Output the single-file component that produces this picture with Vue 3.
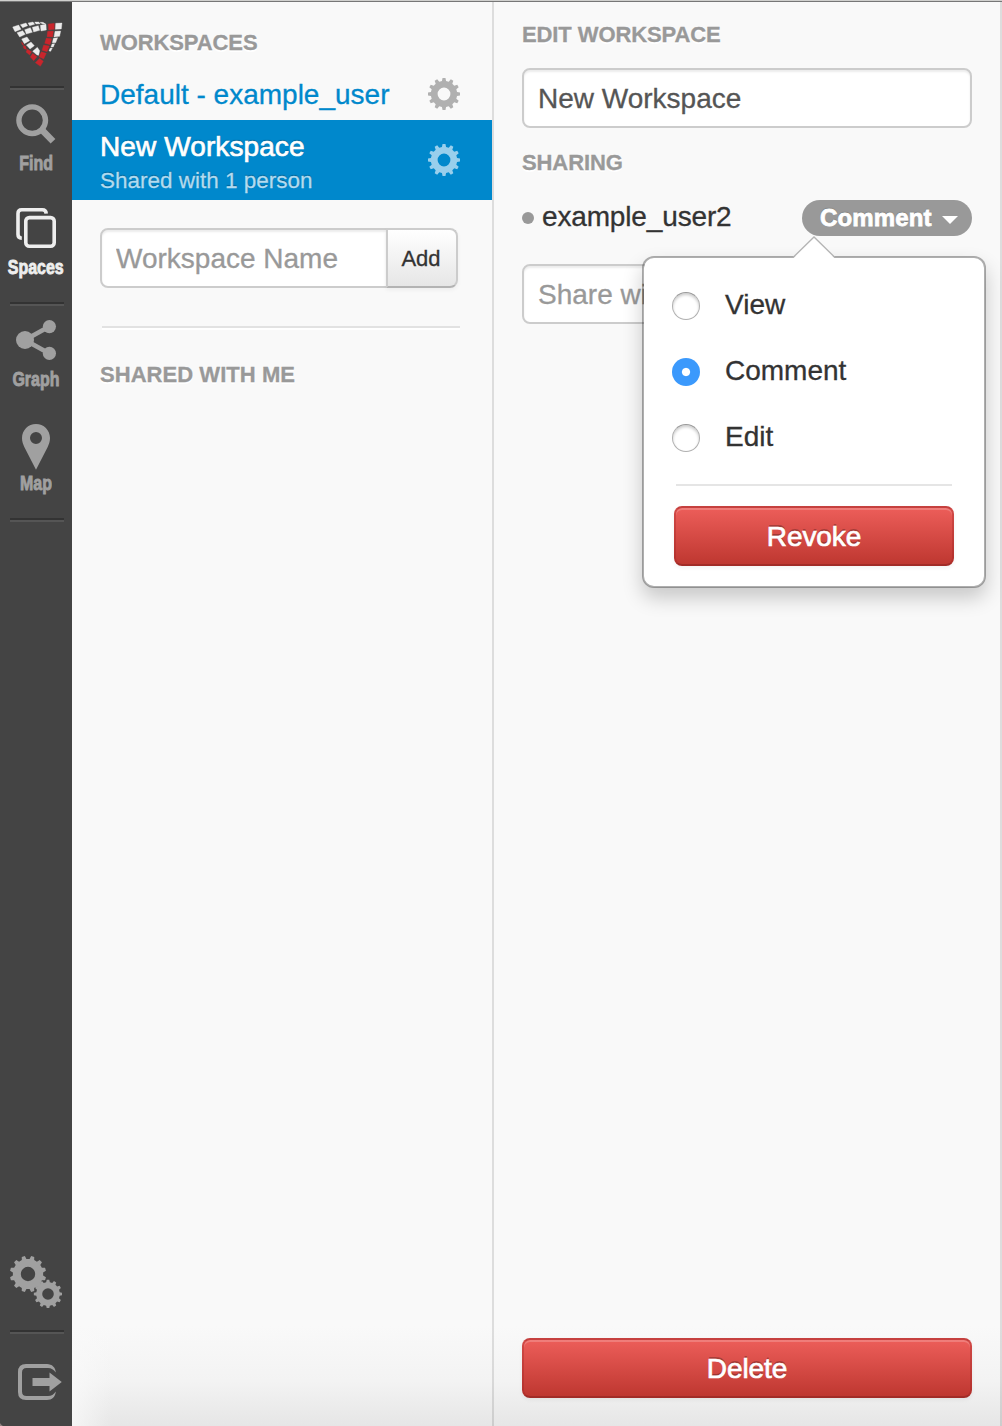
<script setup>
import { ref } from 'vue'

const workspaceName = ref('New Workspace')
const permission = ref('Comment')
const permissions = ['View', 'Comment', 'Edit']

// Outline of a toothed wheel with a round hole
function gear(cx, cy, outer, root, hole, teeth, turn) {
  const step = (Math.PI * 2) / teeth
  const at = (r, a) => `${(cx + r * Math.sin(a)).toFixed(2)} ${(cy - r * Math.cos(a)).toFixed(2)}`
  const points = []
  for (let i = 0; i < teeth; i++) {
    const a = i * step + turn
    points.push(at(root, a - step * 0.3), at(outer, a - step * 0.17), at(outer, a + step * 0.17), at(root, a + step * 0.3))
  }
  return `M${points.join('L')}Z M${cx - hole} ${cy}a${hole} ${hole} 0 1 0 ${hole * 2} 0a${hole} ${hole} 0 1 0 ${-hole * 2} 0Z`
}

const listGear = gear(16, 16, 16.2, 13.2, 6.4, 12, 0)
const bigGear = gear(18, 18, 18.2, 15.2, 7.2, 12, Math.PI / 12)
const smallGear = gear(38, 38, 14.2, 11.8, 5.8, 12, 0)

const whiteTiles = [
  '38,81 56,75 63,88 45,95', '61,74 78,69 83,77 68,83', '84,69 99,66 104,73 89,77',
  '104,66 116,66 121,71 108,72', '120,67 129,67 138,73 126,71',
  '51,98 68,92 76,103 59,111', '74,89 91,83 97,97 79,102', '97,82 115,77 119,91 101,96',
  '121,76 138,73 139,90 123,93',
  '65,117 81,111 89,122 73,131', '79,135 93,126 103,137 90,147', '98,154 112,142 119,152 116,166 111,165',
  '167,70 186,69 184,87 166,88', '165,94 182,93 179,109 162,111',
  '160,115 173,113 167,128 157,128', '156,132 164,131 160,141 153,141', '150,145 157,144 152,154 147,153'
]
const redTiles = [
  '145,72 163,70 163,88 146,90', '143,94 160,93 158,111 141,110', '139,114 155,116 150,134 134,130',
  '131,135 148,138 141,155 126,151', '124,155 139,160 131,177 117,170', '119,175 130,184 121,199 106,188',
  '64,126 68,129 71,136 67,134', '70,137 76,138 80,149 71,145', '82,148 95,155 89,165 78,156',
  '98,160 111,170 101,182 91,171'
]
</script>

<template>
  <div class="page">
    <nav class="sidebar">
      <svg class="logo" width="72" height="84" viewBox="0 6 216 252">
        <polygon v-for="t in whiteTiles" :key="t" :points="t" fill="#ececec" stroke="#ececec" />
        <polygon v-for="t in redTiles" :key="t" :points="t" fill="#c9252c" stroke="#c9252c" />
      </svg>
      <hr class="rule" />
      <a class="item find">
        <svg width="72" height="48" viewBox="0 100 72 48" fill="none" stroke="#a0a0a0">
          <circle cx="32.2" cy="120.2" r="13.300" stroke-width="5.400" />
          <path d="M41.5 129.5L53 141.300" stroke-width="6.600" />
        </svg>
        <span>Find</span>
      </a>
      <a class="item active">
        <svg width="72" height="48" viewBox="0 204 72 48" fill="none" stroke="#eee" stroke-width="3.6">
          <rect x="25.8" y="217.6" width="28.4" height="28.6" rx="3.5" />
          <path d="M21.8 238.2Q18 238 18 234.5V213.5Q18 209.8 21.7 209.8H42.3Q46 209.8 46.2 213.6" />
        </svg>
        <span>Spaces</span>
      </a>
      <hr class="rule" />
      <a class="item graph">
        <svg width="72" height="48" viewBox="0 316 72 48" fill="#a0a0a0">
          <path d="M49.3 326.6L25 340L49.3 353.4" fill="none" stroke="#a0a0a0" stroke-width="4.6" />
          <circle cx="25" cy="340" r="9" />
          <circle cx="49.4" cy="326.6" r="6.6" />
          <circle cx="49.4" cy="353.4" r="6.6" />
        </svg>
        <span>Graph</span>
      </a>
      <a class="item map">
        <svg width="72" height="52" viewBox="0 420 72 52" fill="#a0a0a0" fill-rule="evenodd">
          <path d="M36 424C28.2 424 22 430.2 22 438C22 441.5 23 444 24.3 447L36 469.8L47.7 447C49 444 50 441.5 50 438C50 430.2 43.8 424 36 424ZM36 432A6 6 0 1 1 36 444A6 6 0 1 1 36 432Z" />
        </svg>
        <span>Map</span>
      </a>
      <hr class="rule" />
      <div class="spacer"></div>
      <svg class="gears" width="52" height="52" viewBox="0 0 52 52" fill="#a0a0a0" fill-rule="evenodd">
        <path :d="bigGear" />
        <path :d="smallGear" />
      </svg>
      <hr class="rule" />
      <svg class="logout" width="72" height="92" viewBox="0 1334 72 92">
        <path d="M47 1364C52 1364 55.500 1367.500 55.800 1372.500C53.500 1369.500 51.500 1368 48 1368H26.500Q22 1368 22 1372.500V1391.500Q22 1396 26.500 1396H48C51.500 1396 53.500 1394.500 55.800 1391.500C55.500 1396.500 52 1400 47 1400H26Q18 1400 18 1392V1372Q18 1364 26 1364Z" fill="#a0a0a0" />
        <path d="M32.5 1378H49.5V1372.500L61.800 1382L49.5 1391.500V1386H32.5Z" fill="#a0a0a0" />
      </svg>
    </nav>

    <section class="workspaces">
      <h2>Workspaces</h2>
      <div class="row">
        <div class="name">Default - example_user</div>
        <svg width="32" height="32" viewBox="0 0 32 32"><path :d="listGear" fill="#b0b0b0" fill-rule="evenodd" /></svg>
      </div>
      <div class="row selected">
        <div>
          <div class="name">New Workspace</div>
          <div class="sub">Shared with 1 person</div>
        </div>
        <svg width="32" height="32" viewBox="0 0 32 32"><path :d="listGear" fill="#99cfec" fill-rule="evenodd" /></svg>
      </div>
      <form class="add" @submit.prevent>
        <input placeholder="Workspace Name" />
        <button>Add</button>
      </form>
      <hr class="divider" />
      <h2 class="shared">Shared with me</h2>
    </section>

    <section class="editor">
      <h2>Edit Workspace</h2>
      <input v-model="workspaceName" class="field" />
      <h2 class="sharing">Sharing</h2>
      <div class="person">
        <i class="dot"></i>
        <span class="user">example_user2</span>
        <button class="pill">{{ permission }}<i class="caret"></i></button>
        <div class="popover">
          <svg class="arrow" width="44" height="23" viewBox="0 0 44 23">
            <path d="M0.5 23L22 1.5L43.5 23Z" fill="#fff" />
            <path d="M1 21.5L22 1L43 21.5" fill="none" stroke="#b4b4b4" stroke-width="1.3" />
          </svg>
          <label v-for="p in permissions" :key="p" @click="permission = p">
            <i class="radio" :class="{ on: permission === p }"></i>{{ p }}
          </label>
          <hr />
          <button class="danger">Revoke</button>
        </div>
      </div>
      <input class="field share" placeholder="Share with" />
      <div class="spacer"></div>
      <button class="danger">Delete</button>
    </section>
  </div>
</template>

<style>
body {
  margin: 0;
}
</style>

<style scoped>
.page {
  display: flex;
  box-sizing: border-box;
  width: 1002px;
  height: 1426px;
  padding-top: 2px;
  overflow: hidden;
  background: linear-gradient(#d0d0ce 1px, #777 1px, #777 2px, #f9f9f9 2px);
  color: #333;
  font: 28px/40px "Liberation Sans", Arial, sans-serif;
  -webkit-text-stroke: 0.3px currentColor;
}
* {
  box-sizing: border-box;
}
svg {
  display: block;
  flex: none;
}
.spacer {
  flex: 1;
}
.sidebar {
  display: flex;
  flex-direction: column;
  flex: none;
  width: 72px;
  background: radial-gradient(circle at 8px calc(100% - 8px), #444 9px, #8f8280 10px) 0 100% / 5px 5px no-repeat, #444;
}
.rule {
  flex: none;
  width: 54px;
  height: 4px;
  margin: 0 0 0 10px;
  border: 0;
  background: linear-gradient(#333 50%, #555 50%);
}
.item {
  display: flex;
  flex-direction: column;
  align-items: center;
  color: #a0a0a0;
}
.item span {
  height: 24px;
  font-size: 21px;
  line-height: 24px;
  font-weight: bold;
  -webkit-text-stroke: 0.9px currentColor;
  transform: scaleX(0.76);
}
.find {
  padding-top: 10px;
}
.find span {
  margin-top: 3px;
}
.active {
  margin-top: 29px;
  color: #eee;
}
.active span {
  margin-top: 3px;
  margin-bottom: 23px;
}
.graph {
  padding-top: 10px;
}
.graph span {
  margin-top: 3px;
}
.map {
  margin: 29px 0 23px;
}
.map span {
  margin-top: -1px;
}
.gears {
  margin: 0 0 22px 10px;
}
h2 {
  margin: 0;
  color: #999;
  font-size: 22px;
  line-height: 42px;
  letter-spacing: -0.1px;
  text-transform: uppercase;
  text-shadow: 0 2px 0 #fff;
}
.workspaces {
  flex: none;
  width: 420px;
  padding-top: 20px;
  background:
    linear-gradient(90deg, rgba(249, 249, 249, 0.8), rgba(249, 249, 249, 0) 40px) 0 100% / 40px 100px no-repeat,
    linear-gradient(#f9f9f9 calc(100% - 100px), #f3f3f3 calc(100% - 45px), #e6e6e6);
}
.workspaces h2 {
  padding-left: 28px;
}
.row {
  display: flex;
  align-items: center;
  justify-content: space-between;
  height: 52px;
  margin-top: 4px;
  padding: 0 32px 0 28px;
  color: #0088cc;
}
.name {
  padding-top: 2px;
}
.row.selected {
  height: 80px;
  margin-top: 0;
  background: #0088cc;
  color: #fff;
  text-shadow: 0 -1px 1px rgba(0, 0, 0, 0.3);
}
.selected .name {
  letter-spacing: 0.1px;
  -webkit-text-stroke: 0.7px #fff;
}
.sub {
  color: #b2dbf0;
  font-size: 22.5px;
  line-height: 28px;
}
input {
  min-width: 0;
  height: 60px;
  margin: 0;
  padding: 2px 14px 0;
  border: 2px solid #ccc;
  border-radius: 8px;
  outline: 0;
  background: #fff;
  box-shadow: inset 0 2px 2px rgba(0, 0, 0, 0.075);
  color: #555;
  font: inherit;
  -webkit-text-stroke: 0.3px currentColor;
}
input::placeholder {
  color: #999;
  opacity: 1;
}
.add {
  display: flex;
  width: 358px;
  margin: 28px 0 0 28px;
}
.add input {
  width: 288px;
  border-radius: 8px 0 0 8px;
}
.add button {
  width: 72px;
  height: 60px;
  margin-left: -2px;
  padding: 2px 2px 0 0;
  border: 2px solid #ccc;
  border-bottom-color: #b3b3b3;
  border-radius: 0 8px 8px 0;
  background: linear-gradient(#fff, #e6e6e6);
  box-shadow: 0 2px 4px rgba(0, 0, 0, 0.05);
  color: #333;
  font: 22px "Liberation Sans", Arial, sans-serif;
  -webkit-text-stroke: 0.3px currentColor;
}
.divider {
  width: 358px;
  height: 4px;
  margin: 38px 0 0 30px;
  border: 0;
  background: linear-gradient(#e2e2e2 50%, #fff 50%);
}
.workspaces .shared {
  margin-top: 24px;
  letter-spacing: 0.05px;
}
.editor {
  display: flex;
  flex-direction: column;
  width: 510px;
  padding: 12px 28px 28px;
  border: solid rgba(0, 0, 0, 0.11);
  border-width: 0 2px;
  background: linear-gradient(#f9f9f9 calc(100% - 100px), #f3f3f3 calc(100% - 45px), #e6e6e6) border-box;
}
.field {
  flex: none;
  width: 450px;
  margin-top: 12px;
}
.sharing {
  margin-top: 14px;
}
.person {
  position: relative;
  display: flex;
  align-items: center;
  height: 36px;
  margin-top: 16px;
}
.dot {
  width: 12px;
  height: 12px;
  margin-right: 8px;
  border-radius: 50%;
  background: #999;
}
.user {
  flex: 1;
  letter-spacing: -0.15px;
  line-height: 36px;
  padding-bottom: 3px;
}
.pill {
  display: flex;
  align-items: center;
  justify-content: space-between;
  width: 170px;
  height: 36px;
  padding: 0 14px 0 18px;
  border: 0;
  border-radius: 18px;
  background: #999;
  color: #fff;
  font: bold 24px/36px "Liberation Sans", Arial, sans-serif;
  letter-spacing: 0.15px;
  text-shadow: 0 -1px 1px rgba(0, 0, 0, 0.3);
  -webkit-text-stroke: 0.8px #fff;
}
.caret {
  margin-top: 3px;
  border: 8px solid transparent;
  border-top-color: #fff;
  border-bottom: 0;
}
.popover {
  position: absolute;
  z-index: 2;
  top: 56px;
  left: 120px;
  width: 344px;
  height: 332px;
  padding: 13px 30px 20px;
  border: 2px solid rgba(0, 0, 0, 0.3);
  border-radius: 12px;
  background: #fff;
  background-clip: padding-box;
  box-shadow: 0 10px 20px rgba(0, 0, 0, 0.2);
}
.arrow {
  position: absolute;
  top: -22px;
  left: 148px;
}
.popover label {
  display: flex;
  align-items: center;
  height: 66px;
  padding-top: 2px;
}
.radio {
  width: 28px;
  height: 28px;
  margin: 1px 25px 0 -2px;
  border-radius: 50%;
  border: 1px solid #b0b0b0;
  border-top-color: #999;
  background: #fff;
  box-shadow: inset 0 2px 3px rgba(0, 0, 0, 0.2);
}
.radio.on {
  border: 0;
  background: radial-gradient(circle, #fff 3.6px, #3b99fc 4.6px);
  box-shadow: none;
}
.popover hr {
  width: 276px;
  height: 2px;
  margin: 15px 0 20px 2px;
  border: 0;
  background: #e5e5e5;
}
.danger {
  display: block;
  flex: none;
  width: 100%;
  height: 60px;
  padding: 2px 0 0;
  border: 2px solid;
  border-color: rgba(150, 30, 30, 0.45) rgba(150, 30, 30, 0.3) rgba(120, 30, 30, 0.4);
  border-radius: 8px;
  background: linear-gradient(#ee5f5b, #bd362f) border-box;
  box-shadow: inset 0 2px 0 rgba(255, 255, 255, 0.2), 0 2px 4px rgba(0, 0, 0, 0.05);
  color: #fff;
  font: 28px/54px "Liberation Sans", Arial, sans-serif;
  letter-spacing: -0.1px;
  text-shadow: 0 -2px 0 rgba(0, 0, 0, 0.25);
  -webkit-text-stroke: 0.7px #fff;
}
.share {
  margin-top: 28px;
}
</style>
